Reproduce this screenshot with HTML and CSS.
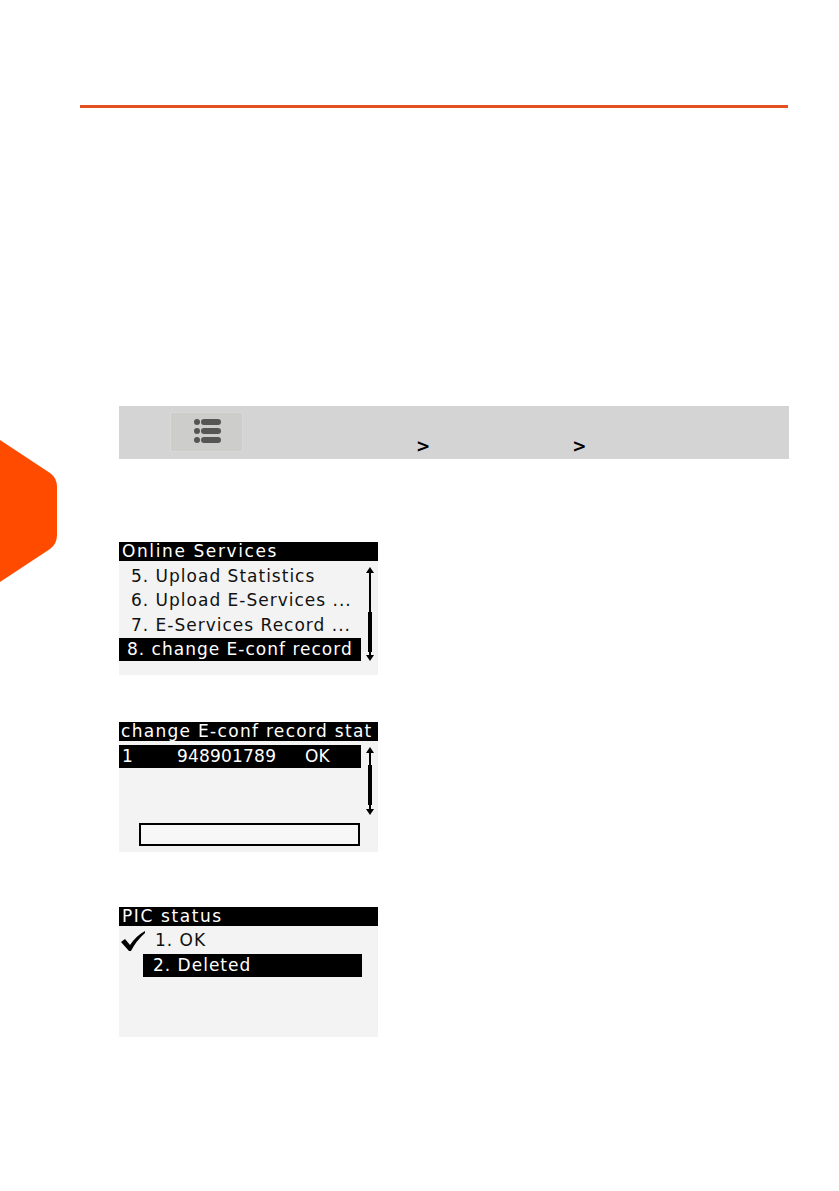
FILE: index.html
```html
<!DOCTYPE html>
<html>
<head>
<meta charset="utf-8">
<link rel="stylesheet" href="styles.css">
</head>
<body>
<div class="page">
  <div class="rule"></div>
  <svg class="tab" width="58" height="142" viewBox="0 0 58 142">
    <path d="M0 0 L50 33 Q57 38 57 47 L57 95 Q57 104 50 109 L0 142 Z" fill="#ff4b00"/>
  </svg>
  <div class="content">
    <div class="crumbs">
      <div class="menu-btn">
        <svg width="30" height="30" viewBox="0 0 30 30">
          <circle cx="4" cy="5" r="3" fill="#555"/>
          <rect x="8" y="2" width="20" height="6" rx="3" fill="#555"/>
          <circle cx="4" cy="14" r="3" fill="#555"/>
          <rect x="8" y="11" width="20" height="6" rx="3" fill="#555"/>
          <circle cx="4" cy="23" r="3" fill="#555"/>
          <rect x="8" y="20" width="20" height="6" rx="3" fill="#555"/>
        </svg>
      </div>
      <span class="sep sep1">&gt;</span>
      <span class="sep sep2">&gt;</span>
    </div>

    <div class="lcd lcd1">
      <div class="lcd-head">Online Services</div>
      <div class="lcd-body">
        <div class="lcd-list">
          <div class="row">5. Upload Statistics</div>
          <div class="row">6. Upload E-Services ...</div>
          <div class="row">7. E-Services Record ...</div>
          <div class="row sel">8. change E-conf record</div>
        </div>
        <div class="scroll scroll1">
          <svg width="10" height="94" viewBox="0 0 10 94">
            <path d="M5 0 L9 6 L1 6 Z" fill="#000"/>
            <rect x="4" y="5" width="2" height="84" fill="#000"/>
            <rect x="3" y="45" width="4" height="40" fill="#000"/>
            <path d="M5 94 L9 88 L1 88 Z" fill="#000"/>
          </svg>
        </div>
      </div>
    </div>

    <div class="lcd lcd2">
      <div class="lcd-head head2">change E-conf record stat</div>
      <div class="lcd-body">
        <div class="lcd-list">
          <div class="row sel rec"><span class="c1">1</span><span class="c2">948901789</span><span class="c3">OK</span></div>
        </div>
        <div class="scroll scroll2">
          <svg width="10" height="68" viewBox="0 0 10 68">
            <path d="M5 0 L9 6 L1 6 Z" fill="#000"/>
            <rect x="4" y="5" width="2" height="58" fill="#000"/>
            <rect x="3" y="18" width="4" height="40" fill="#000"/>
            <path d="M5 68 L9 62 L1 62 Z" fill="#000"/>
          </svg>
        </div>
      </div>
      <div class="input"></div>
    </div>

    <div class="lcd lcd3">
      <div class="lcd-head">PIC status</div>
      <div class="opt">
        <svg class="check" width="26" height="22" viewBox="0 0 26 22">
          <path d="M1 12 L5 9 L10 15 Q16 6 25 1 L25 3 Q16 11 11 21 L9 21 Z" fill="#000"/>
        </svg>
        <span class="opt-text">1. OK</span>
      </div>
      <div class="opt2">2. Deleted</div>
    </div>
  </div>
</div>
</body>
</html>
```

FILE: styles.css
```css
html, body {
  margin: 0;
  padding: 0;
  background: #fff;
}
.page {
  position: relative;
  width: 839px;
  height: 1191px;
  overflow: hidden;
  font-family: "Liberation Sans", Arial, sans-serif;
}
.rule {
  margin-left: 80px;
  width: 708px;
  height: 3px;
  margin-top: 0;
  border-top: 105px solid #fff;
  background: #e4501f;
  background-clip: content-box;
}
.tab {
  position: absolute;
  left: 0;
  top: 440px;
}
.content {
  margin-left: 119px;
  width: 670px;
  padding-top: 298px;
}
.crumbs {
  height: 53px;
  background: #d4d4d4;
  display: flex;
  align-items: flex-start;
  padding-left: 51px;
}
.menu-btn {
  margin-top: 6px;
  width: 73px;
  height: 40px;
  background: #cdcdcb;
  box-shadow: inset 0 0 0 1px #d8d8d6;
  display: flex;
  align-items: center;
  justify-content: center;
}
.menu-btn svg {
  margin-left: 2px;
}
.sep {
  font-family: "DejaVu Sans", sans-serif;
  font-size: 17px;
  font-weight: bold;
  line-height: 17px;
  margin-top: 32px;
  color: #000;
}
.sep1 {
  margin-left: 173px;
}
.sep2 {
  margin-left: 142px;
}
.lcd {
  width: 259px;
  background: #f3f3f3;
  font-family: "DejaVu Sans", sans-serif;
  font-size: 17px;
  letter-spacing: 1px;
  color: #111;
  overflow: hidden;
  white-space: nowrap;
}
.lcd1 {
  margin-top: 83px;
  height: 133px;
}
.lcd2 {
  margin-top: 47px;
  height: 130px;
}
.lcd3 {
  margin-top: 55px;
  height: 130px;
}
.lcd-head {
  height: 19px;
  line-height: 19px;
  background: #000;
  color: #fff;
  padding-left: 3px;
  letter-spacing: 1.6px;
  overflow: hidden;
}
.lcd-head.head2 {
  padding-left: 2px;
  letter-spacing: 1.3px;
}
.lcd-body {
  display: flex;
  height: 100px;
}
.lcd-list {
  width: 242px;
  padding-top: 3.5px;
  display: flex;
  flex-direction: column;
  gap: 1.5px;
}
.row {
  height: 23px;
  line-height: 23px;
  padding-left: 12px;
  overflow: hidden;
}
.row.sel {
  background: #000;
  color: #fff;
  padding-left: 8px;
}
.lcd2 .lcd-list {
  padding-top: 4px;
}
.row.rec {
  padding-left: 3px;
  display: flex;
  letter-spacing: 0.2px;
}
.c1 { width: 55px; }
.c2 { width: 128px; }
.c3 { width: 40px; }
.scroll {
  margin-left: 4px;
}
.scroll1 {
  padding-top: 6px;
}
.scroll2 {
  padding-top: 6px;
}
.lcd2 .lcd-body {
  height: 80px;
}
.input {
  margin-left: 20px;
  margin-top: 2px;
  width: 217px;
  height: 19px;
  border: 2px solid #000;
  background: #f7f7f7;
}
.opt {
  display: flex;
  align-items: center;
  height: 28px;
}
.check {
  margin-left: 1px;
  margin-top: 2px;
}
.opt-text {
  margin-left: 9px;
}
.opt2 {
  margin-left: 24px;
  width: 209px;
  height: 23px;
  line-height: 23px;
  background: #000;
  color: #fff;
  padding-left: 10px;
}
```
